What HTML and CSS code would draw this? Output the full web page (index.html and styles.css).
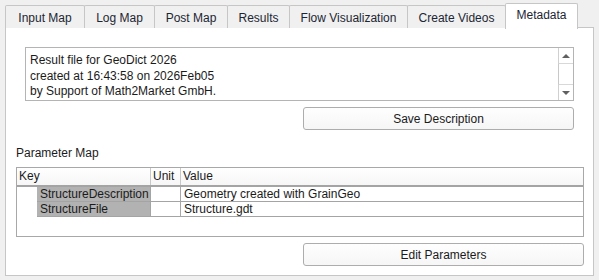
FILE: index.html
```html
<!DOCTYPE html>
<html>
<head>
<meta charset="utf-8">
<link rel="stylesheet" href="styles.css">
</head>
<body>
<div class="app">
  <div class="tabbar">
    <div class="tab t1">Input Map</div>
    <div class="tab t2">Log Map</div>
    <div class="tab t3">Post Map</div>
    <div class="tab t4">Results</div>
    <div class="tab t5">Flow Visualization</div>
    <div class="tab t6">Create Videos</div>
    <div class="tab t7 active">Metadata</div>
  </div>
  <div class="pane">
    <div class="desc-group">
      <div class="textbox">
        <div class="textcontent">Result file for GeoDict 2026<br>created at 16:43:58 on 2026Feb05<br>by Support of Math2Market GmbH.</div>
        <div class="scrollbar">
          <div class="sb-btn sb-up"><span class="arrow-up"></span></div>
          <div class="sb-track"></div>
          <div class="sb-btn sb-down"><span class="arrow-down"></span></div>
        </div>
      </div>
      <div class="btnrow"><div class="button save">Save Description</div></div>
    </div>
    <div class="label">Parameter Map</div>
    <div class="table">
      <div class="thead">
        <div class="th c-key">Key</div>
        <div class="th c-unit">Unit</div>
        <div class="th c-val">Value</div>
      </div>
      <div class="row">
        <div class="indent"></div>
        <div class="td c-keycell">StructureDescription</div>
        <div class="td c-unit"></div>
        <div class="td c-val">Geometry created with GrainGeo</div>
      </div>
      <div class="row">
        <div class="indent"></div>
        <div class="td c-keycell">StructureFile</div>
        <div class="td c-unit"></div>
        <div class="td c-val">Structure.gdt</div>
      </div>
    </div>
    <div class="btnrow"><div class="button edit">Edit Parameters</div></div>
  </div>
</div>
</body>
</html>
```
FILE: styles.css
```css
html, body {
  margin: 0;
  padding: 0;
  background: #f0f0f0;
  width: 599px;
  height: 280px;
  overflow: hidden;
  font-family: "Liberation Sans", Arial, sans-serif;
  font-size: 12px;
  color: #1b1b1b;
}
.app {
  padding: 3px 0 0 5px;
}
.tabbar {
  display: flex;
  align-items: flex-end;
  height: 25px;
  position: relative;
  z-index: 2;
}
.tab {
  box-sizing: border-box;
  height: 23px;
  border: 1px solid #c6c6c6;
  border-bottom: none;
  border-radius: 2px 2px 0 0;
  background: #f0f0f0;
  margin-right: -1px;
  display: flex;
  align-items: center;
  justify-content: center;
  color: #1d2633;
  padding-top: 1px;
}
.t1 { width: 80px; }
.t2 { width: 71px; }
.t3 { width: 74px; }
.t4 { width: 63px; }
.t5 { width: 119px; }
.t6 { width: 99px; }
.t7 { width: 73px; }
.tab.active {
  height: 26px;
  background: #ffffff;
  margin-bottom: -1px;
  margin-left: 0;
  padding-top: 0;
  padding-bottom: 3px;
}
.pane {
  box-sizing: border-box;
  width: 589px;
  height: 249px;
  margin-top: -1px;
  background: #ffffff;
  border: 1px solid #c6c6c6;
  padding: 0 9px 0 10px;
  display: flex;
  flex-direction: column;
}
.desc-group {
  padding: 19px 10px 0 9px;
}
.textbox {
  box-sizing: border-box;
  height: 54px;
  border: 1px solid #b4b4b4;
  display: flex;
}
.textcontent {
  flex: 1;
  padding: 5px 0 0 4px;
  line-height: 15.5px;
}
.scrollbar {
  width: 14px;
  border-left: 1px solid #d0d0d0;
  display: flex;
  flex-direction: column;
  background: #ffffff;
}
.sb-btn {
  height: 15px;
  display: flex;
  align-items: center;
  justify-content: center;
}
.sb-up { border-bottom: 1px solid #d8d8d8; }
.sb-down { border-top: 1px solid #d8d8d8; }
.sb-track {
  flex: 1;
  border-left: 1px solid #c8c8c8;
  margin-left: -1px;
}
.arrow-up {
  width: 0; height: 0;
  border-left: 4px solid transparent;
  border-right: 4px solid transparent;
  border-bottom: 4px solid #606060;
}
.arrow-down {
  width: 0; height: 0;
  border-left: 4px solid transparent;
  border-right: 4px solid transparent;
  border-top: 4px solid #606060;
}
.btnrow {
  display: flex;
  justify-content: flex-end;
  margin-top: 6px;
}
.button {
  box-sizing: border-box;
  height: 23px;
  border: 1px solid #adadad;
  border-radius: 3px;
  background: linear-gradient(#fefefe, #f6f6f6);
  display: flex;
  align-items: center;
  justify-content: center;
  color: #1b1b1b;
}
.save { width: 271px; }
.edit { width: 281px; }
.label {
  margin-top: 15px;
  height: 16px;
  line-height: 16px;
  margin-bottom: 6px;
}
.table {
  box-sizing: border-box;
  height: 70px;
  border: 1px solid #a8a8a8;
}
.thead {
  display: flex;
  height: 17px;
  border-bottom: 2px solid #a4a4a4;
  background: linear-gradient(#ffffff, #f6f6f6);
}
.th {
  box-sizing: border-box;
  padding-left: 2px;
  line-height: 17px;
}
.thead .c-key { width: 134px; border-right: 1px solid #c8c8c8; }
.c-unit { width: 30px; border-right: 1px solid #a8a8a8; box-sizing: border-box; }
.thead .c-unit { border-right-color: #c8c8c8; }
.c-val { flex: 1; }
.row {
  display: flex;
  height: 15px;
}
.indent {
  width: 20px;
  border-bottom: 1px solid transparent;
}
.td {
  box-sizing: border-box;
  border-bottom: 1px solid #a4a4a4;
  line-height: 14px;
  padding-left: 3px;
}
.c-keycell {
  width: 114px;
  background: #b2b2b2;
  border-right: 1px solid #a4a4a4;
}
.row .c-val { padding-left: 3px; }
```
